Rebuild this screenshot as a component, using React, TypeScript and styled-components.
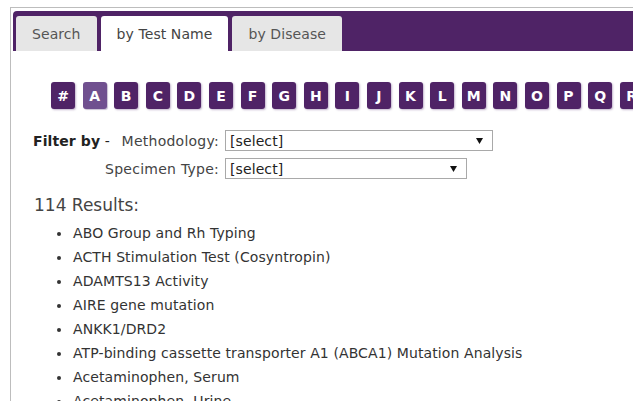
import React from "react";
import styled, { createGlobalStyle } from "styled-components";

const purple = "#4f2366";

const Global = createGlobalStyle`
  html, body { margin: 0; padding: 0; background: #fff; overflow: hidden; }
  body { font-family: "DejaVu Sans", Verdana, sans-serif; color: #333; }
`;

const Page = styled.div`
  padding: 7px 0 0 10px;
`;

const Panel = styled.div`
  width: 700px;
  height: 420px;
  border-top: 1px solid #bdbdbd;
  border-left: 1px solid #bdbdbd;
  padding: 3px 0 0 2px;
  box-sizing: border-box;
  overflow: hidden;
`;

const TabBar = styled.div`
  display: flex;
  gap: 4px;
  align-items: flex-end;
  height: 40px;
  box-sizing: border-box;
  padding: 5px 0 0 3px;
  background: ${purple};
  border-radius: 4px 0 0 0;
`;

const Tab = styled.div<{ $active?: boolean }>`
  height: ${(p) => (p.$active ? "36px" : "35px")};
  margin-bottom: ${(p) => (p.$active ? "-1px" : "0")};
  box-sizing: border-box;
  padding: 0 16px;
  display: flex;
  align-items: center;
  font-size: 14px;
  letter-spacing: 0.08px;
  color: ${(p) => (p.$active ? "#444" : "#555")};
  background: ${(p) => (p.$active ? "#fff" : "#e6e6e6")};
  border-radius: 3px 3px 0 0;
`;

const Content = styled.div`
  padding: 31px 0 0 20px;
`;

const Letters = styled.div`
  display: flex;
  gap: 7.6px;
  margin-left: 18px;
  white-space: nowrap;
`;

const Letter = styled.div<{ $active?: boolean }>`
  flex: none;
  width: 24px;
  height: 27px;
  box-sizing: border-box;
  display: flex;
  align-items: center;
  justify-content: center;
  font-size: 14px;
  font-weight: bold;
  color: #fff;
  background: ${(p) => (p.$active ? "#70508f" : purple)};
  border-radius: 3px;
  box-shadow: ${(p) =>
    p.$active ? "1px 1px 1px #c9c0d3" : "1px 1px 2px rgba(80, 40, 110, 0.35)"};
`;

const Filters = styled.div`
  display: grid;
  grid-template-columns: 186px auto;
  column-gap: 6px;
  row-gap: 7px;
  margin-top: 21px;
  font-size: 14px;
  letter-spacing: 0.25px;
  color: #444;
`;

const LabelCell = styled.div<{ $split?: boolean }>`
  display: flex;
  align-items: center;
  justify-content: ${(p) => (p.$split ? "space-between" : "flex-end")};
`;

const FilterTitle = styled.span`
  color: #222;
  letter-spacing: 0.1px;
  b { font-weight: bold; }
`;

const SelectBox = styled.div<{ $w: number }>`
  width: ${(p) => p.$w}px;
  height: 21px;
  box-sizing: border-box;
  border: 1px solid #a9a9a9;
  background: #fff;
  display: flex;
  align-items: center;
  justify-content: space-between;
  padding: 0 9px 0 4px;
  color: #222;
  font-size: 14px;
  letter-spacing: 0.1px;
`;

const Arrow = styled.svg`
  width: 7px;
  height: 6px;
`;

const ResultsTitle = styled.div`
  margin: 16px 0 0 1px;
  font-size: 17px;
  color: #444;
`;

const List = styled.ul`
  margin: 6px 0 0 0;
  padding: 0 0 0 39px;
  font-size: 14px;
  letter-spacing: 0.1px;
  color: #333;
  line-height: 24px;
  li { padding-left: 1px; }
`;

const letters = ["#", ..."ABCDEFGHIJKLMNOPQRS".split("")];
const results = [
  "ABO Group and Rh Typing",
  "ACTH Stimulation Test (Cosyntropin)",
  "ADAMTS13 Activity",
  "AIRE gene mutation",
  "ANKK1/DRD2",
  "ATP-binding cassette transporter A1 (ABCA1) Mutation Analysis",
  "Acetaminophen, Serum",
  "Acetaminophen, Urine",
];

const Select = ({ w }: { w: number }) => (
  <SelectBox $w={w}>
    <span>[select]</span>
    <Arrow viewBox="0 0 7 6">
      <path d="M0 0H7L3.5 6Z" fill="#111" />
    </Arrow>
  </SelectBox>
);

export default function App() {
  return (
    <Page>
      <Global />
      <Panel>
        <TabBar>
          <Tab>Search</Tab>
          <Tab $active>by Test Name</Tab>
          <Tab>by Disease</Tab>
        </TabBar>
        <Content>
          <Letters>
            {letters.map((l) => (
              <Letter key={l} $active={l === "A"}>
                {l}
              </Letter>
            ))}
          </Letters>
          <Filters>
            <LabelCell $split>
              <FilterTitle>
                <b>Filter by</b> -
              </FilterTitle>
              <span>Methodology:</span>
            </LabelCell>
            <Select w={268} />
            <LabelCell>
              <span>Specimen Type:</span>
            </LabelCell>
            <Select w={242} />
          </Filters>
          <ResultsTitle>114 Results:</ResultsTitle>
          <List>
            {results.map((r) => (
              <li key={r}>{r}</li>
            ))}
          </List>
        </Content>
      </Panel>
    </Page>
  );
}
